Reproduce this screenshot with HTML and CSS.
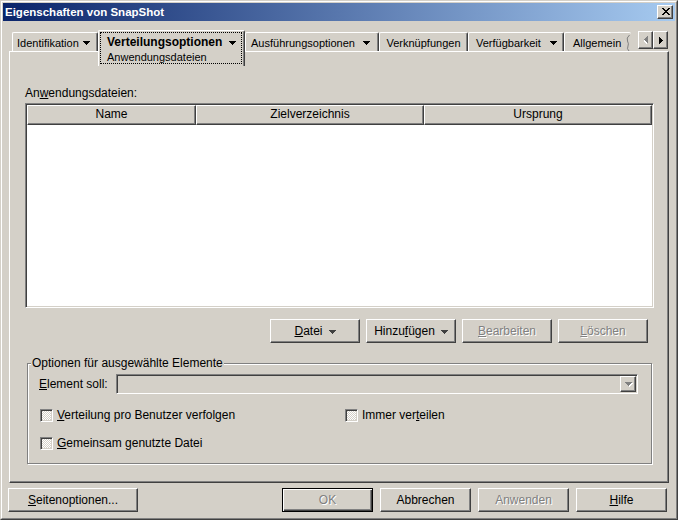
FILE: index.html
```html
<!DOCTYPE html>
<html lang="de">
<head>
    <meta charset="UTF-8">
    <meta name="viewport" content="width=device-width, initial-scale=1.0">
    <title>Eigenschaften von SnapShot</title>
    <link rel="stylesheet" href="styles.css">
</head>
<body>
<div class="window">
    <div class="frame">
        <div class="titlebar">
            <span class="title">Eigenschaften von SnapShot</span>
            <button class="btn close" type="button">
                <svg width="8" height="7" viewBox="0 0 8 7"><path d="M0 0h2v1h-2zM6 0h2v1h-2zM1 1h2v1h-2zM5 1h2v1h-2zM2 2h4v1h-4zM3 3h2v1h-2zM2 4h4v1h-4zM1 5h2v1h-2zM5 5h2v1h-2zM0 6h2v1h-2zM6 6h2v1h-2z"/></svg>
            </button>
        </div>

        <div class="client">
            <div class="tabstrip">
                <div class="tab tab-ident">Identifikation
                    <svg class="arrow" width="7" height="4" viewBox="0 0 7 4"><path d="M0 0h7v1h-1v1h-1v1h-1v1h-1v-1h-1v-1h-1v-1h-1z"/></svg>
                </div>
                <div class="tab-active">
                    <div class="focus">
                        <div class="focus-title">Verteilungsoptionen
                            <svg class="arrow" width="7" height="4" viewBox="0 0 7 4"><path d="M0 0h7v1h-1v1h-1v1h-1v1h-1v-1h-1v-1h-1v-1h-1z"/></svg>
                        </div>
                        <div class="focus-sub">Anwendungsdateien</div>
                    </div>
                </div>
                <div class="tab tab-ausf">Ausführungsoptionen
                    <svg class="arrow" width="7" height="4" viewBox="0 0 7 4"><path d="M0 0h7v1h-1v1h-1v1h-1v1h-1v-1h-1v-1h-1v-1h-1z"/></svg>
                </div>
                <div class="tab tab-verk">Verknüpfungen</div>
                <div class="tab tab-verf">Verfügbarkeit
                    <svg class="arrow" width="7" height="4" viewBox="0 0 7 4"><path d="M0 0h7v1h-1v1h-1v1h-1v1h-1v-1h-1v-1h-1v-1h-1z"/></svg>
                </div>
                <div class="tab tab-allg">Allgemein
                    <svg class="cut" width="6" height="16" viewBox="0 0 6 16"><path d="M4.5 0 Q1 3 2.5 6 T3 11 Q1.5 14 4 16"/></svg>
                </div>
                <div class="scroll">
                    <button class="btn scroll-btn" type="button">
                        <svg class="left" width="4" height="8" viewBox="0 0 4 8">
                            <path class="hl" d="M1 1v7h1v-1h1v-1h1v-1h1v-1h-1v-1h-1v-1h-1v-1z"/>
                            <path class="dim" d="M0 0v7h1v-1h1v-1h1v-1h1v-1h-1v-1h-1v-1h-1v-1z"/>
                        </svg>
                    </button>
                    <button class="btn scroll-btn" type="button">
                        <svg width="4" height="7" viewBox="0 0 4 7"><path d="M0 0v7h1v-1h1v-1h1v-1h1v-1h-1v-1h-1v-1h-1v-1z"/></svg>
                    </button>
                </div>
            </div>

            <div class="panel">
                <div class="list-label">An<u>w</u>endungsdateien:</div>
                <div class="list">
                    <div class="list-head">
                        <div class="col col-name">Name</div>
                        <div class="col col-ziel">Zielverzeichnis</div>
                        <div class="col col-urs">Ursprung</div>
                    </div>
                </div>

                <div class="list-actions">
                    <button class="btn action" type="button"><span><u>D</u>atei</span>
                        <svg class="arrow" width="7" height="4" viewBox="0 0 7 4"><path d="M0 0h7v1h-1v1h-1v1h-1v1h-1v-1h-1v-1h-1v-1h-1z"/></svg>
                    </button>
                    <button class="btn action" type="button"><span>Hinzu<u>f</u>ügen</span>
                        <svg class="arrow" width="7" height="4" viewBox="0 0 7 4"><path d="M0 0h7v1h-1v1h-1v1h-1v1h-1v-1h-1v-1h-1v-1h-1z"/></svg>
                    </button>
                    <button class="btn action disabled" type="button"><span><u>B</u>earbeiten</span></button>
                    <button class="btn action disabled" type="button"><span><u>L</u>öschen</span></button>
                </div>

                <fieldset class="group">
                    <legend>Optionen für ausgewählte Elemente</legend>
                    <div class="field">
                        <span class="field-label"><u>E</u>lement soll:</span>
                        <div class="combo">
                            <span class="btn combo-btn">
                                <svg width="8" height="5" viewBox="0 0 8 5">
                                    <path class="hl" d="M1 1h7v1h-1v1h-1v1h-1v1h-1v-1h-1v-1h-1v-1h-1z"/>
                                    <path class="dim" d="M0 0h7v1h-1v1h-1v1h-1v1h-1v-1h-1v-1h-1v-1h-1z"/>
                                </svg>
                            </span>
                        </div>
                    </div>
                    <div class="checks">
                        <label class="check"><span class="box"></span><span><u>V</u>erteilung pro Benutzer verfolgen</span></label>
                        <label class="check"><span class="box"></span><span>Immer ver<u>t</u>eilen</span></label>
                        <label class="check"><span class="box"></span><span><u>G</u>emeinsam genutzte Datei</span></label>
                    </div>
                </fieldset>
            </div>

            <div class="footer">
                <button class="btn foot foot-wide" type="button"><span><u>S</u>eitenoptionen...</span></button>
                <div class="foot-right">
                    <button class="btn foot default disabled" type="button">OK</button>
                    <button class="btn foot" type="button">Abbrechen</button>
                    <button class="btn foot disabled" type="button">Anwenden</button>
                    <button class="btn foot" type="button"><span><u>H</u>ilfe</span></button>
                </div>
            </div>
        </div>
    </div>
</div>
</body>
</html>
```

FILE: styles.css
```css
body {
    margin: 0;
    background-color: #d4d0c8;
    font-family: "Liberation Sans", Arial, sans-serif;
    font-size: 12px;
    color: #000;
}
u {
    text-underline-offset: 1px;
}
.window {
    width: 678px;
    height: 520px;
    box-sizing: border-box;
    border: 1px solid;
    border-color: #d4d0c8 #404040 #404040 #d4d0c8;
}
.frame {
    height: 100%;
    box-sizing: border-box;
    border: 1px solid;
    border-color: #fff #808080 #808080 #fff;
    padding: 1px;
    display: flex;
    flex-direction: column;
}

/* raised button look */
.btn {
    box-sizing: border-box;
    margin: 0;
    padding: 0;
    font: inherit;
    color: #000;
    background-color: #d4d0c8;
    border: 1px solid;
    border-color: #fff #404040 #404040 #fff;
    box-shadow: inset -1px -1px 0 #808080;
    display: flex;
    align-items: center;
    justify-content: center;
}
.btn.disabled {
    color: #808080;
    text-shadow: 1px 1px 0 #fff;
}

.titlebar {
    flex: none;
    height: 18px;
    display: flex;
    align-items: center;
    padding: 0 2px;
    background: linear-gradient(to right, #0a246a, #a6caf0);
}
.title {
    flex: 1;
    color: #fff;
    font-weight: bold;
    font-size: 11.5px;
}
.close {
    width: 16px;
    height: 14px;
    padding: 0 0 1px 1px;
}

.client {
    flex: 1;
    display: flex;
    flex-direction: column;
    padding: 9px 6px 5px;
}

/* tabs */
.tabstrip {
    flex: none;
    height: 21px;
    display: flex;
    align-items: flex-start;
    padding-left: 3px;
}
.tab {
    box-sizing: border-box;
    height: 19px;
    margin-top: 2px;
    padding: 1px 7px 0 6px;
    display: flex;
    align-items: center;
    font-size: 11px;
    line-height: 16px;
    white-space: nowrap;
    border-top: 1px solid #fff;
    border-left: 1px solid #fff;
    border-right: 1px solid #404040;
    border-radius: 2px 2px 0 0;
    box-shadow: inset -1px 0 0 #808080;
}
.tab .arrow {
    margin-left: auto;
}
.tab-ident { width: 86px; padding-left: 4px; }
.tab-ausf { width: 134px; padding-left: 5px; padding-right: 8px; }
.tab-verk { width: 89px; justify-content: center; padding: 1px 0 0; }
.tab-verf { width: 96px; padding-left: 7px; padding-right: 6px; }
.tab-allg {
    width: 67px;
    padding-left: 8px;
    padding-right: 0;
    border-right: none;
    box-shadow: none;
}
.cut {
    margin-left: auto;
    fill: none;
    stroke: #808080;
}
.tab-active {
    position: relative;
    z-index: 1;
    box-sizing: border-box;
    width: 147px;
    height: 36px;
    margin-bottom: -15px;
    padding: 1px 2px 0 1px;
    background-color: #d4d0c8;
    border-top: 1px solid #fff;
    border-left: 1px solid #fff;
    border-right: 1px solid #404040;
    border-radius: 2px 2px 0 0;
    box-shadow: inset -1px 0 0 #808080;
}
.focus {
    border: 1px dotted #000;
    padding: 0 5px 0 6px;
}
.focus-title {
    display: flex;
    align-items: center;
    font-weight: bold;
    line-height: 18px;
}
.focus-title .arrow {
    margin-left: auto;
    margin-top: 1px;
}
.focus-sub {
    font-size: 11px;
    line-height: 12px;
}
.scroll {
    display: flex;
    margin: 1px 1px 0 auto;
}
.scroll-btn {
    width: 15px;
    height: 18px;
}
.scroll-btn svg {
    margin-left: 1px;
}
.scroll-btn .left {
    transform: scaleX(-1);
}
.hl { fill: #fff; }
.dim { fill: #808080; }

/* property page */
.panel {
    box-sizing: border-box;
    height: 432px;
    padding: 34px 14px 0 15px;
    border: 1px solid;
    border-color: #fff #404040 #404040 #fff;
    box-shadow: inset -1px -1px 0 #808080;
}
.list-label {
    line-height: 14px;
}
.list {
    box-sizing: border-box;
    height: 205px;
    margin-top: 3px;
    background-color: #fff;
    border: 1px solid;
    border-color: #808080 #fff #fff #808080;
    box-shadow: inset 1px 1px 0 #404040, inset -1px -1px 0 #d4d0c8;
    padding: 1px;
}
.list-head {
    display: flex;
    height: 20px;
}
.col {
    box-sizing: border-box;
    background-color: #d4d0c8;
    border: 1px solid;
    border-color: #fff #404040 #404040 #fff;
    box-shadow: inset -1px -1px 0 #808080;
    text-align: center;
    line-height: 17px;
}
.col-name { width: 169px; }
.col-ziel { width: 228px; }
.col-urs { width: 228px; }

.list-actions {
    display: flex;
    justify-content: flex-end;
    gap: 6px;
    margin: 11px 6px 0 0;
}
.action {
    width: 90px;
    height: 24px;
    gap: 6px;
}
.action .arrow {
    fill: #404040;
    margin-top: 1px;
}

.group {
    margin: 13px 2px 0;
    padding: 4px 13px 12px 11px;
    min-width: 0;
    border: 1px solid #808080;
    box-shadow: inset 1px 1px 0 #fff, 1px 1px 0 #fff;
}
.group legend {
    margin-left: -8px;
    padding: 0 1px;
    line-height: 14px;
    background-color: #d4d0c8;
}
.field {
    display: flex;
    align-items: center;
}
.field-label {
    width: 77px;
}
.combo {
    flex: 1;
    box-sizing: border-box;
    height: 20px;
    display: flex;
    justify-content: flex-end;
    padding: 1px;
    border: 1px solid;
    border-color: #808080 #fff #fff #808080;
    box-shadow: inset 1px 1px 0 #404040, inset -1px -1px 0 #d4d0c8;
}
.combo-btn {
    width: 16px;
    height: 16px;
    padding: 1px 0 0 1px;
}
.checks {
    display: grid;
    grid-template-columns: 305px 1fr;
    row-gap: 12px;
    margin-top: 13px;
}
.check {
    display: flex;
    align-items: center;
    gap: 4px;
    margin-left: 1px;
    line-height: 16px;
}
.box {
    box-sizing: border-box;
    width: 13px;
    height: 13px;
    border: 1px solid;
    border-color: #808080 #fff #fff #808080;
    box-shadow: inset 1px 1px 0 #404040, inset -1px -1px 0 #d4d0c8;
    background: repeating-conic-gradient(#fff 0 25%, #d4d0c8 0 50%) 0 0 / 2px 2px;
}

/* dialog buttons */
.footer {
    display: flex;
    margin: 5px 2px 0 -1px;
}
.foot {
    width: 91px;
    height: 24px;
}
.foot-wide {
    width: 130px;
}
.foot-right {
    display: flex;
    gap: 7px;
    margin-left: auto;
}
.foot.default {
    border-color: #000;
    box-shadow: inset 1px 1px 0 #fff, inset -1px -1px 0 #404040, inset -2px -2px 0 #808080;
}
```
